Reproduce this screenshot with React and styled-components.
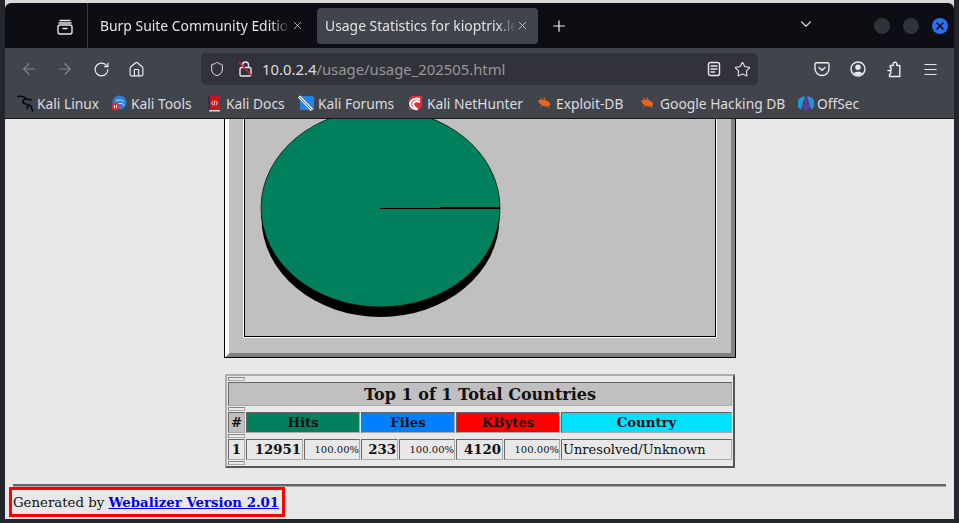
import React from "react"
import styled, { createGlobalStyle } from "styled-components"
import { ArrowLeft, ArrowRight, RotateCw, House, Shield, Star, X, Plus, ChevronDown, Menu } from "lucide-react"

const GlobalStyle = createGlobalStyle`
  html, body { margin: 0; padding: 0; overflow: hidden; }
  body { background: #23262d; }
`

const Desk = styled.div`
  width: 959px;
  height: 523px;
  box-sizing: border-box;
  padding: 3px 5px 4px 5px;
  overflow: hidden;
  background: linear-gradient(#d9d9d9 0 10px, #23262d 10px);
  background-size: 949px 100%;
  background-position: 5px 0;
  background-repeat: no-repeat;
  background-color: #23262d;
`
const Window = styled.div`
  width: 949px;
  height: 516px;
  display: flex;
  flex-direction: column;
  border-radius: 6px 6px 0 0;
  overflow: hidden;
  font-family: "Noto Sans", sans-serif;
  color: #d8d8da;
`
const TabBar = styled.div`
  height: 45px;
  flex: none;
  display: flex;
  align-items: center;
  background: #0d0e13;
`
const ViewButton = styled.div`
  width: 83px;
  height: 45px;
  box-sizing: border-box;
  padding: 2px 0 0 51px;
  display: flex;
  align-items: center;
  border-right: 1px solid #3a3b42;
  flex: none;
`
const Tab = styled.div`
  height: 36px;
  flex: none;
  box-sizing: border-box;
  display: flex;
  align-items: center;
  border-radius: 4px;
  background: ${(p) => (p.$active ? "#42444c" : "transparent")};
  width: ${(p) => p.$width}px;
  padding-left: ${(p) => p.$pad}px;
`
const TabTitle = styled.span`
  width: ${(p) => p.$width}px;
  flex: none;
  overflow: hidden;
  white-space: nowrap;
  font-size: 13.9px;
  color: #e4e4e6;
  -webkit-mask-image: linear-gradient(to right, #000 90%, transparent 100%);
  mask-image: linear-gradient(to right, #000 90%, transparent 100%);
`
const NewTab = styled.div`
  margin: 1px 0 0 12px;
  display: flex;
  color: #f0f0f2;
`
const ListTabs = styled.div`
  margin: 0 0 3px 229px;
  display: flex;
  color: #d8d8da;
`
const WindowButtons = styled.div`
  display: flex;
  align-items: center;
  gap: 13px;
  margin: 0 0 0 59px;
`
const WinDot = styled.div`
  width: 16px;
  height: 16px;
  border-radius: 50%;
  background: ${(p) => (p.$on ? "#2a6ff0" : "#2e323c")};
  color: #0d0e13;
  display: flex;
  align-items: center;
  justify-content: center;
`
const NavBar = styled.div`
  height: 42px;
  flex: none;
  display: flex;
  align-items: center;
  background: #42444c;
`
const NavIcon = styled.div`
  width: 20px;
  height: 20px;
  flex: none;
  display: flex;
  align-items: center;
  justify-content: center;
  color: ${(p) => (p.$dim ? "#85868c" : "#ececee")};
  margin-left: ${(p) => p.$left}px;
`
const UrlBar = styled.div`
  width: 557px;
  height: 32px;
  margin-left: 55px;
  flex: none;
  display: flex;
  align-items: center;
  box-sizing: border-box;
  padding: 0 6px 0 6px;
  border-radius: 5px;
  background: #32333a;
`
const UrlText = styled.div`
  margin-left: 8px;
  width: 445px;
  flex: none;
  font-size: 14.85px;
  white-space: nowrap;
  color: #96979c;
  b { font-weight: 400; color: #dcdcde; }
`
const BookmarkBar = styled.div`
  height: 29px;
  flex: none;
  box-sizing: border-box;
  display: flex;
  align-items: center;
  background: #42444c;
  border-bottom: 1px solid #16171b;
  padding: 0 0 2px 12px;
`
const Bookmark = styled.div`
  display: flex;
  align-items: center;
  flex: none;
  width: ${(p) => p.$width}px;
  font-size: 13.8px;
  white-space: nowrap;
  color: #dcdcde;
  svg { flex: none; margin-right: ${(p) => p.$gap ?? 4}px; }
`
const Page = styled.div`
  flex: 1;
  min-height: 0;
  overflow: hidden;
  background: #e8e8e8;
  display: flex;
  flex-direction: column;
  align-items: center;
  font-family: "DejaVu Serif", serif;
  color: #111;
`
const Chart = styled.svg`
  display: block;
  flex: none;
  margin-left: 1px;
`
const StatsTable = styled.table`
  width: 510px;
  margin-top: 16px;
  flex: none;
  box-sizing: border-box;
  table-layout: fixed;
  border-collapse: separate;
  border-spacing: 1px;
  border-width: 2px;
  border-style: solid;
  border-color: #adadad #555 #555 #adadad;
  margin-left: 1px;
`
const Cell = styled.td`
  box-sizing: border-box;
  height: ${(p) => p.$h || 21}px;
  padding: ${(p) => p.$top || 0}px ${(p) => (p.$pad === undefined ? 1 : p.$pad)}px 0;
  border: 1px solid;
  border-color: #666 #aaa #aaa #666;
  background: ${(p) => p.$bg || "#e8e8e8"};
  text-align: ${(p) => p.$align || "center"};
  font-size: ${(p) => p.$size || 13.3}px;
  font-weight: ${(p) => (p.$bold ? 700 : 400)};
  line-height: 1;
  white-space: nowrap;
  overflow: hidden;
`
const Spacer = styled.td`
  box-sizing: border-box;
  height: 4px;
  padding: 0;
  font-size: 0;
  line-height: 0;
  border: 1px solid;
  border-color: #888 #aaa #aaa #888;
`
const Rule = styled.div`
  width: 933px;
  height: 2px;
  flex: none;
  margin-top: 16px;
  background: #666;
  border-bottom: 1px solid #a8a8a8;
  box-sizing: content-box;
`
const Footer = styled.div`
  align-self: flex-start;
  margin: 0 0 0 4px;
  box-sizing: border-box;
  width: 276px;
  height: 30px;
  padding-left: 1px;
  display: flex;
  align-items: center;
  border: 3px solid #f00;
  font-size: 13.3px;
  white-space: pre;
  a { color: #00e; font-weight: 700; text-decoration: underline; }
`

const stroke = { fill: "none", stroke: "currentColor", strokeWidth: 1.4, strokeLinecap: "round", strokeLinejoin: "round" }

const ViewIcon = () => (
  <svg width="18" height="18" viewBox="0 0 18 18" color="#e8e8ea" {...stroke}>
    <path d="M4 2.500h10M3 5h12" />
    <rect x="2" y="7" width="14" height="9" rx="2" />
    <path d="M7 10.500h4" />
  </svg>
)
const BrokenLock = () => (
  <svg width="16" height="18" viewBox="0 0 16 18" style={{ marginLeft: 13, flex: "none" }}>
    <g fill="none" stroke="#e8e8ea" strokeWidth="1.4">
      <rect x="2" y="7.500" width="11" height="8.500" rx="1.500" />
      <path d="M4.500 7.500V5a3 3 0 0 1 6 0v2.500" />
    </g>
    <path d="M1 2l13 14" stroke="#e5163c" strokeWidth="1.5" />
  </svg>
)
const ReaderIcon = () => (
  <svg width="14" height="16" viewBox="0 0 14 16" style={{ flex: "none" }} color="#e8e8ea" {...stroke}>
    <rect x="1.500" y="1.500" width="11" height="13" rx="2" />
    <path d="M4 5h6M4 8h6M4 11h3.500" />
  </svg>
)
const PocketIcon = () => (
  <svg width="16" height="16" viewBox="0 0 16 16" {...stroke}>
    <path d="M2.500 1.800h11a1.500 1.500 0 0 1 1.500 1.500v4.200a7 7 0 0 1-14 0V3.300a1.500 1.500 0 0 1 1.500-1.500z" />
    <path d="M5 6.500l3 2.800 3-2.800" />
  </svg>
)
const AccountIcon = () => (
  <svg width="16" height="16" viewBox="0 0 16 16">
    <circle cx="8" cy="8" r="7" fill="none" stroke="currentColor" strokeWidth="1.4" />
    <circle cx="8" cy="6.300" r="2.700" fill="currentColor" />
    <path d="M3.500 12.500c1-2.200 8-2.200 9 0a6.500 6.500 0 0 1-9 0z" fill="currentColor" />
  </svg>
)
const PuzzleIcon = () => (
  <svg width="16" height="17" viewBox="0 0 16 17" {...stroke}>
    <path d="M2 9.500h2.200c1.500 0 1.500-3 0-3V4.500h3V3a1.800 1.800 0 0 1 3.600 0v1.500h3v11H3.500v-2.200c1.800 0 1.800-3.800 0-3.800z" />
  </svg>
)

const KaliIcon = () => (
  <svg width="17" height="17" viewBox="0 0 17 17" fill="none" stroke="#08080a" strokeWidth="1.600" strokeLinecap="round" strokeLinejoin="round">
    <path d="M1 1.500c3-.5 6 0 8 2 1 1 3 1 5 1.500M9 3.500c-2 1-4 2-3 4 1.500 2 5 1.500 7 3 1.500 1 2 3 2.500 5.500M11 11c-1 1-1 2-.5 3" />
  </svg>
)
const ToolsIcon = () => (
  <svg width="16" height="16" viewBox="0 0 16 16">
    <circle cx="8.500" cy="7.500" r="7" fill="#2f7fd8" />
    <path d="M5 6c3-2 6-1 8 1M7 9c2-1 4-1 6 1" stroke="#d6ebff" strokeWidth="1" fill="none" />
    <circle cx="4.500" cy="11.500" r="3.800" fill="#ec2b2b" />
    <path d="M3.500 10v3M5.500 10v3" stroke="#fff" strokeWidth="0.900" />
  </svg>
)
const DocsIcon = () => (
  <svg width="14" height="17" viewBox="0 0 14 17">
    <rect x="1" y="1" width="12" height="14" fill="#c4161c" />
    <rect x="1" y="1" width="2" height="15" fill="#26365f" />
    <rect x="2" y="15" width="11" height="1.500" fill="#dadada" />
    <path d="M6 6L4.700 8 6 10M9 6l1.300 2L9 10M8 5.500l-1 5" stroke="#fff" strokeWidth="0.800" fill="none" />
  </svg>
)
const ForumsIcon = () => (
  <svg width="16" height="16" viewBox="0 0 16 16">
    <rect x="2" y="1" width="14" height="14" rx="1.500" fill="#2583e8" />
    <path d="M1 1.500l13 13.500" stroke="#fff" strokeWidth="3" />
    <path d="M1.500 2l12 12.500" stroke="#20242c" strokeWidth="0.800" />
  </svg>
)
const NetHunterIcon = () => (
  <svg width="16" height="16" viewBox="0 0 16 16">
    <path d="M5 1h10v11l-3 3H2V4z" fill="#e12d39" />
    <path d="M13 4C7 2 2 6 3.500 10.500c1 2.500 3.500 3.500 7 4C7 12 5 10 6.500 7.500 8 6 11 6 13 7" fill="none" stroke="#fff" strokeWidth="2" />
  </svg>
)
const RoachIcon = () => (
  <svg width="15" height="14" viewBox="0 0 15 14">
    <ellipse cx="7.500" cy="7" rx="6" ry="3.100" transform="rotate(18 7.500 7)" fill="#e8641c" />
    <path d="M1 5l3 1M3 1.500l3 3M7 1l1 3M3 12l3-3M12 12l-2-3" stroke="#e8641c" strokeWidth="0.900" fill="none" />
  </svg>
)
const OffSecIcon = () => (
  <svg width="16" height="17" viewBox="0 0 16 17">
    <path d="M7 1.500A7 7 0 0 0 3 14.500z" fill="#2196d8" />
    <path d="M9 1.500a7 7 0 0 1 4 13z" fill="#2a8ee0" />
    <path d="M7.200 3h1.600v13H7.200z" fill="#6a35c8" />
    <path d="M4.500 11l2 3.500V9zM11.500 11l-2 3.500V9z" fill="#6a45d8" />
  </svg>
)

// webalizer draws the country pie as a single png, bevel included
const CountryPie = () => (
  <Chart width="512" height="239" viewBox="224 119 512 239">
    <g shapeRendering="crispEdges">
      <rect x="224" y="100" width="512" height="258" fill="#000" />
      <rect x="225" y="100" width="510" height="257" fill="#808080" />
      <polygon points="225,100 229,100 229,353 225,357" fill="#fff" />
      <rect x="229" y="100" width="502" height="253" fill="#c0c0c0" />
      <rect x="243" y="100" width="474" height="238" fill="#fff" />
      <rect x="244" y="100" width="472" height="237" fill="#000" />
      <rect x="245" y="100" width="470" height="236" fill="#c0c0c0" />
    </g>
    <ellipse cx="380.500" cy="218" rx="119" ry="99" fill="#000" />
    <ellipse cx="380.500" cy="208" rx="119.500" ry="99" fill="#00805c" stroke="#000" strokeWidth="0.700" />
    <g shapeRendering="crispEdges">
      <rect x="380" y="208" width="60" height="1" fill="#000" />
      <rect x="440" y="207" width="60" height="2" fill="#000" />
    </g>
  </Chart>
)

export default function App() {
  return (
    <>
      <GlobalStyle />
      <Desk>
        <Window>
          <TabBar>
            <ViewButton><ViewIcon /></ViewButton>
            <Tab $width={229} $pad={12}>
              <TabTitle $width={190}>Burp Suite Community Edition</TabTitle>
              <X size={13} strokeWidth={1.5} style={{ marginLeft: 1 }} />
            </Tab>
            <Tab $active $width={221} $pad={8}>
              <TabTitle $width={191}>Usage Statistics for kioptrix.level</TabTitle>
              <X size={13} strokeWidth={1.5} />
            </Tab>
            <NewTab><Plus size={18} strokeWidth={1.6} /></NewTab>
            <ListTabs><ChevronDown size={18} strokeWidth={1.5} /></ListTabs>
            <WindowButtons>
              <WinDot />
              <WinDot />
              <WinDot $on><X size={12} strokeWidth={3} /></WinDot>
            </WindowButtons>
          </TabBar>
          <NavBar>
            <NavIcon $dim $left={14}><ArrowLeft size={18} strokeWidth={1.5} /></NavIcon>
            <NavIcon $dim $left={16}><ArrowRight size={18} strokeWidth={1.5} /></NavIcon>
            <NavIcon $left={16}><RotateCw size={17} strokeWidth={1.6} /></NavIcon>
            <NavIcon $left={15}><House size={17} strokeWidth={1.6} /></NavIcon>
            <UrlBar>
              <Shield size={16} strokeWidth={1.5} color="#e8e8ea" style={{ marginLeft: 2, flex: "none" }} />
              <BrokenLock />
              <UrlText><b>10.0.2.4</b>/usage/usage_202505.html</UrlText>
              <ReaderIcon />
              <Star size={17} strokeWidth={1.5} color="#e8e8ea" style={{ marginLeft: 13, flex: "none" }} />
            </UrlBar>
            <NavIcon $left={54}><PocketIcon /></NavIcon>
            <NavIcon $left={16}><AccountIcon /></NavIcon>
            <NavIcon $left={16}><PuzzleIcon /></NavIcon>
            <NavIcon $left={16}><Menu size={17} strokeWidth={1.4} /></NavIcon>
          </NavBar>
          <BookmarkBar>
            <Bookmark $width={94} $gap={3}><KaliIcon />Kali Linux</Bookmark>
            <Bookmark $width={96} $gap={4}><ToolsIcon />Kali Tools</Bookmark>
            <Bookmark $width={91} $gap={5}><DocsIcon />Kali Docs</Bookmark>
            <Bookmark $width={109} $gap={4}><ForumsIcon />Kali Forums</Bookmark>
            <Bookmark $width={130} $gap={4}><NetHunterIcon />Kali NetHunter</Bookmark>
            <Bookmark $width={103} $gap={4}><RoachIcon />Exploit-DB</Bookmark>
            <Bookmark $width={158} $gap={5}><RoachIcon />Google Hacking DB</Bookmark>
            <Bookmark $width={70} $gap={3}><OffSecIcon />OffSec</Bookmark>
          </BookmarkBar>
          <Page>
            <CountryPie />
            <StatsTable>
              <colgroup>
                {[17, 57, 56, 37, 56, 47, 56, 171].map((w, i) => <col key={i} style={{ width: w }} />)}
              </colgroup>
              <tbody>
                <tr><Spacer /></tr>
                <tr><Cell colSpan={8} $h={24} $bg="#c0c0c0" $bold $size={16} $top={2}>Top 1 of 1 Total Countries</Cell></tr>
                <tr><Spacer /></tr>
                <tr>
                  <Cell $bg="#c0c0c0" $bold $pad={0}>#</Cell>
                  <Cell colSpan={2} $bg="#00805c" $bold>Hits</Cell>
                  <Cell colSpan={2} $bg="#0080ff" $bold>Files</Cell>
                  <Cell colSpan={2} $bg="#ff0000" $bold>KBytes</Cell>
                  <Cell $bg="#00e0ff" $bold>Country</Cell>
                </tr>
                <tr><Spacer /></tr>
                <tr>
                  <Cell $bold $pad={0} $size={13.3}>1</Cell>
                  <Cell $bold $align="right" $size={13.3}>12951</Cell>
                  <Cell $align="right" $size={10} $pad={0}>100.00%</Cell>
                  <Cell $bold $align="right" $size={13.3}>233</Cell>
                  <Cell $align="right" $size={10} $pad={0}>100.00%</Cell>
                  <Cell $bold $align="right" $size={13.3}>4120</Cell>
                  <Cell $align="right" $size={10} $pad={0}>100.00%</Cell>
                  <Cell $align="left" $size={13}>Unresolved/Unknown</Cell>
                </tr>
                <tr><Spacer /></tr>
              </tbody>
            </StatsTable>
            <Rule />
            <Footer>Generated by <a href="#webalizer">Webalizer Version 2.01</a></Footer>
          </Page>
        </Window>
      </Desk>
    </>
  )
}
